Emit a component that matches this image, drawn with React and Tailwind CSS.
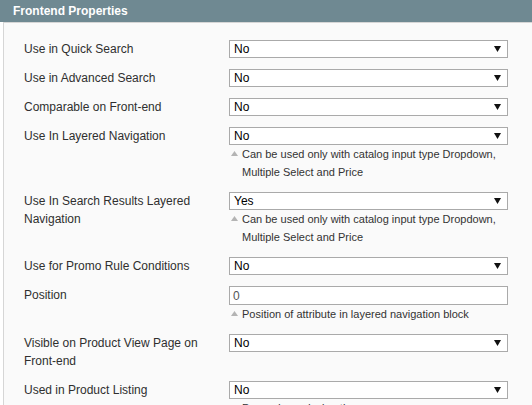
import React from "react";

const font = { fontFamily: '"Liberation Sans", Arial, sans-serif' };

function Select({ value }) {
  return (
    <div className="flex items-center justify-between h-[18px] w-[279px] border border-[#aaaaaa] bg-white pl-[4px] pr-[6px] text-[12px] leading-[16px] text-black">
      <span>{value}</span>
      <svg width="7" height="6" viewBox="0 0 7 6">
        <path d="M0 0 H7 L3.5 6 Z" fill="#111" />
      </svg>
    </div>
  );
}

function Input({ value }) {
  return (
    <div className="flex items-center h-[19px] w-[279px] border border-[#aaaaaa] bg-white pl-[3px] text-[12px] leading-[16px] text-[#555]">
      {value}
    </div>
  );
}

function Note({ children }) {
  return (
    <div className="relative pl-[13px] text-[11px] leading-[18px] text-[#333] w-[290px]">
      <svg className="absolute left-[2px] top-[6px]" width="7" height="5" viewBox="0 0 7 5">
        <path d="M0 5 L3.5 0 L7 5 Z" fill="#b4b4b4" />
      </svg>
      {children}
    </div>
  );
}

function Row({ label, children }) {
  return (
    <div className="flex pb-[11px]">
      <div className="w-[205px] text-[12px] leading-[18px] text-[#2f2f2f] pr-[10px]">{label}</div>
      <div className="flex flex-col">{children}</div>
    </div>
  );
}

export default function App() {
  return (
    <div className="w-[532px] h-[405px] overflow-hidden bg-white" style={font}>
      <div className="h-[22px] bg-[#6f8992] pl-[13px] flex items-center">
        <span className="text-white font-bold text-[12px] leading-[16px]">Frontend Properties</span>
      </div>
      <div className="ml-[3px] border-l border-t border-[#d6d6d6] bg-[#fafafa] h-[383px] pl-[20px] pt-[17px]">
        <Row label="Use in Quick Search"><Select value="No" /></Row>
        <Row label="Use in Advanced Search"><Select value="No" /></Row>
        <Row label="Comparable on Front-end"><Select value="No" /></Row>
        <Row label="Use In Layered Navigation">
          <Select value="No" />
          <Note>Can be used only with catalog input type Dropdown, Multiple Select and Price</Note>
        </Row>
        <Row label="Use In Search Results Layered Navigation">
          <Select value="Yes" />
          <Note>Can be used only with catalog input type Dropdown, Multiple Select and Price</Note>
        </Row>
        <Row label="Use for Promo Rule Conditions"><Select value="No" /></Row>
        <Row label="Position">
          <Input value="0" />
          <Note>Position of attribute in layered navigation block</Note>
        </Row>
        <Row label="Visible on Product View Page on Front-end"><Select value="No" /></Row>
        <Row label="Used in Product Listing">
          <Select value="No" />
          <Note>Depends on design theme</Note>
        </Row>
      </div>
    </div>
  );
}
